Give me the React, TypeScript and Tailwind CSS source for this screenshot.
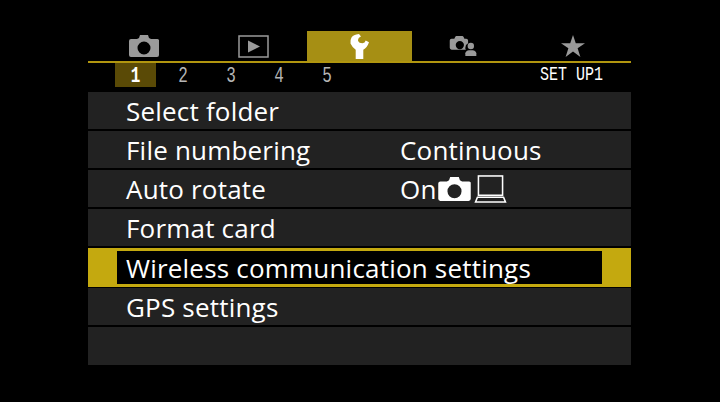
import type { ReactNode } from "react";

function CameraIcon({ className }: { className?: string }) {
  return (
    <svg viewBox="0 0 30 24" className={className}>
      <path
        fill="currentColor"
        fillRule="evenodd"
        d="M2 5h6l2-1 1-3h8l1 3 2 1h6a2 2 0 0 1 2 1v15a2 2 0 0 1-2 2H2a2 2 0 0 1-2-2V7a2 2 0 0 1 2-2ZM15 7.500a6.500 6.500 0 1 0 0 13 6.500 6.500 0 0 0 0-13Z"
      />
    </svg>
  );
}

function PlayIcon() {
  return (
    <svg viewBox="0 0 31 23" className="h-[23px] w-[31px] text-[#9a9a9a]">
      <rect x="1" y="1" width="29" height="21" fill="none" stroke="currentColor" strokeWidth="1.500" />
      <path fill="currentColor" d="M10 5.500 22 11.500 10 17.500Z" />
    </svg>
  );
}

function WrenchIcon() {
  return (
    <svg viewBox="0 0 20 25" className="h-[25px] w-[20px] text-white">
      <path
        fill="currentColor"
        d="M9 0Q3 .5 1.500 3.500Q0 6 .5 9.500Q2 13 5.700 15.700V25H13.300V15.700Q17 14 19 8.300L15.700 6.500Q15 9 12.500 9.200Q9 9.200 8 6.700Q8 3.500 11 2.500Z"
      />
    </svg>
  );
}

function CameraPersonIcon() {
  return (
    <svg viewBox="0 0 30 24" className="h-[22px] w-[29px] text-[#9a9a9a]">
      <path
        fill="currentColor"
        fillRule="evenodd"
        d="M2 4h3l1-2 1-1h7l1 1 1 2h2a2 2 0 0 1 2 2v3a5.500 5.500 0 0 0-3 5c0 1 0 2 1 2v0h-16a2 2 0 0 1-2-2V6a2 2 0 0 1 2-2Zm9 2.500a4.500 4.500 0 1 0 0 9 4.500 4.500 0 0 0 0-9Z"
      />
      <circle cx="23" cy="12" r="3.500" fill="currentColor" />
      <path fill="currentColor" d="M17 23v-3c0-2 2-3.500 4-3.500h4c2 0 4 1.500 4 3.500v3Z" />
    </svg>
  );
}

function StarIcon() {
  return (
    <svg viewBox="0 0 26 24" className="h-[24px] w-[24px] text-[#9a9a9a]">
      <path fill="currentColor" d="M13 0l3 9h10l-8 5.500 3 9.500-8-6-8 6 3-9.500L0 9h10Z" />
    </svg>
  );
}

function LaptopIcon() {
  return (
    <svg viewBox="0 0 33 29" className="ml-[2px] h-[28px] w-[33px] text-white">
      <rect x="4" y="1" width="25" height="20" fill="none" stroke="currentColor" strokeWidth="1.600" />
      <path fill="none" stroke="currentColor" strokeWidth="1.600" d="M3 23h27l2 5H1Z" />
    </svg>
  );
}

function Row({ label, value, last }: { label: string; value?: ReactNode; last?: boolean }) {
  return (
    <div
      className={
        last
          ? "flex h-[38px] items-center bg-[#222222] pl-[38px] text-[26px] leading-none tracking-[0.2px] text-white"
          : "flex h-[37px] items-center bg-[#222222] pl-[38px] text-[26px] leading-none tracking-[0.2px] text-white"
      }
    >
      <span className="w-[274px] shrink-0">{label}</span>
      {value}
    </div>
  );
}

export default function App() {
  const gray = "h-[24px] w-[30px] text-[#9a9a9a]";

  return (
    <div className="h-[402px] w-[720px] overflow-hidden bg-black pt-[31px] pl-[88px] font-['Open_Sans',sans-serif]">
      <div className="w-[543px]">
        <div className="flex h-[32px] border-b-2 border-[#b1960f] pl-[4px]">
          <div className="flex w-[107px] items-center justify-center pr-[3px]">
            <CameraIcon className={gray} />
          </div>
          <div className="flex w-[108px] items-center justify-center">
            <PlayIcon />
          </div>
          <div className="flex w-[105px] items-center justify-center bg-[#a68f14]">
            <WrenchIcon />
          </div>
          <div className="flex w-[103px] items-center justify-center">
            <CameraPersonIcon />
          </div>
          <div className="flex w-[116px] items-center justify-center">
            <StarIcon />
          </div>
        </div>

        <div className="flex h-[29px] items-start pl-[27px] font-['Liberation_Mono',monospace]">
          <span className="flex h-[24px] w-[41px] items-center justify-center bg-[#5a4a06] pt-[3px] text-[16px] font-bold text-white">
            <span className="scale-y-[1.35]">1</span>
          </span>
          <div className="ml-[3px] flex">
            {["2", "3", "4", "5"].map((n) => (
              <span key={n} className="flex h-[24px] w-[48px] items-center justify-center pt-[3px] text-[16px] text-[#b5b5b5]">
                <span className="scale-y-[1.35]">{n}</span>
              </span>
            ))}
          </div>
          <span className="ml-auto flex h-[24px] items-center pt-[3px] pr-[28px] text-[15px] text-white">
            <span className="scale-y-[1.3]">SET UP1</span>
          </span>
        </div>

        <div className="flex flex-col gap-[2px]">
          <Row label="Select folder" />
          <Row label="File numbering" value={<span>Continuous</span>} />
          <Row
            label="Auto rotate"
            value={
              <span className="flex items-center gap-[1px]">
                On
                <CameraIcon className="h-[26px] w-[33px] text-white" />
                <LaptopIcon />
              </span>
            }
          />
          <Row label="Format card" />

          <div className="-mb-px flex h-[39px] border-x-2 border-y-[3px] border-[#c4a90f] bg-[#c4a90f] text-[26px] leading-none tracking-[0.2px] text-white">
            <div className="mr-[27px] ml-[27px] flex flex-1 items-center bg-black pl-[9px]">
              Wireless communication settings
            </div>
          </div>

          <Row label="GPS settings" />
          <Row label="" last />
        </div>
      </div>
    </div>
  );
}
